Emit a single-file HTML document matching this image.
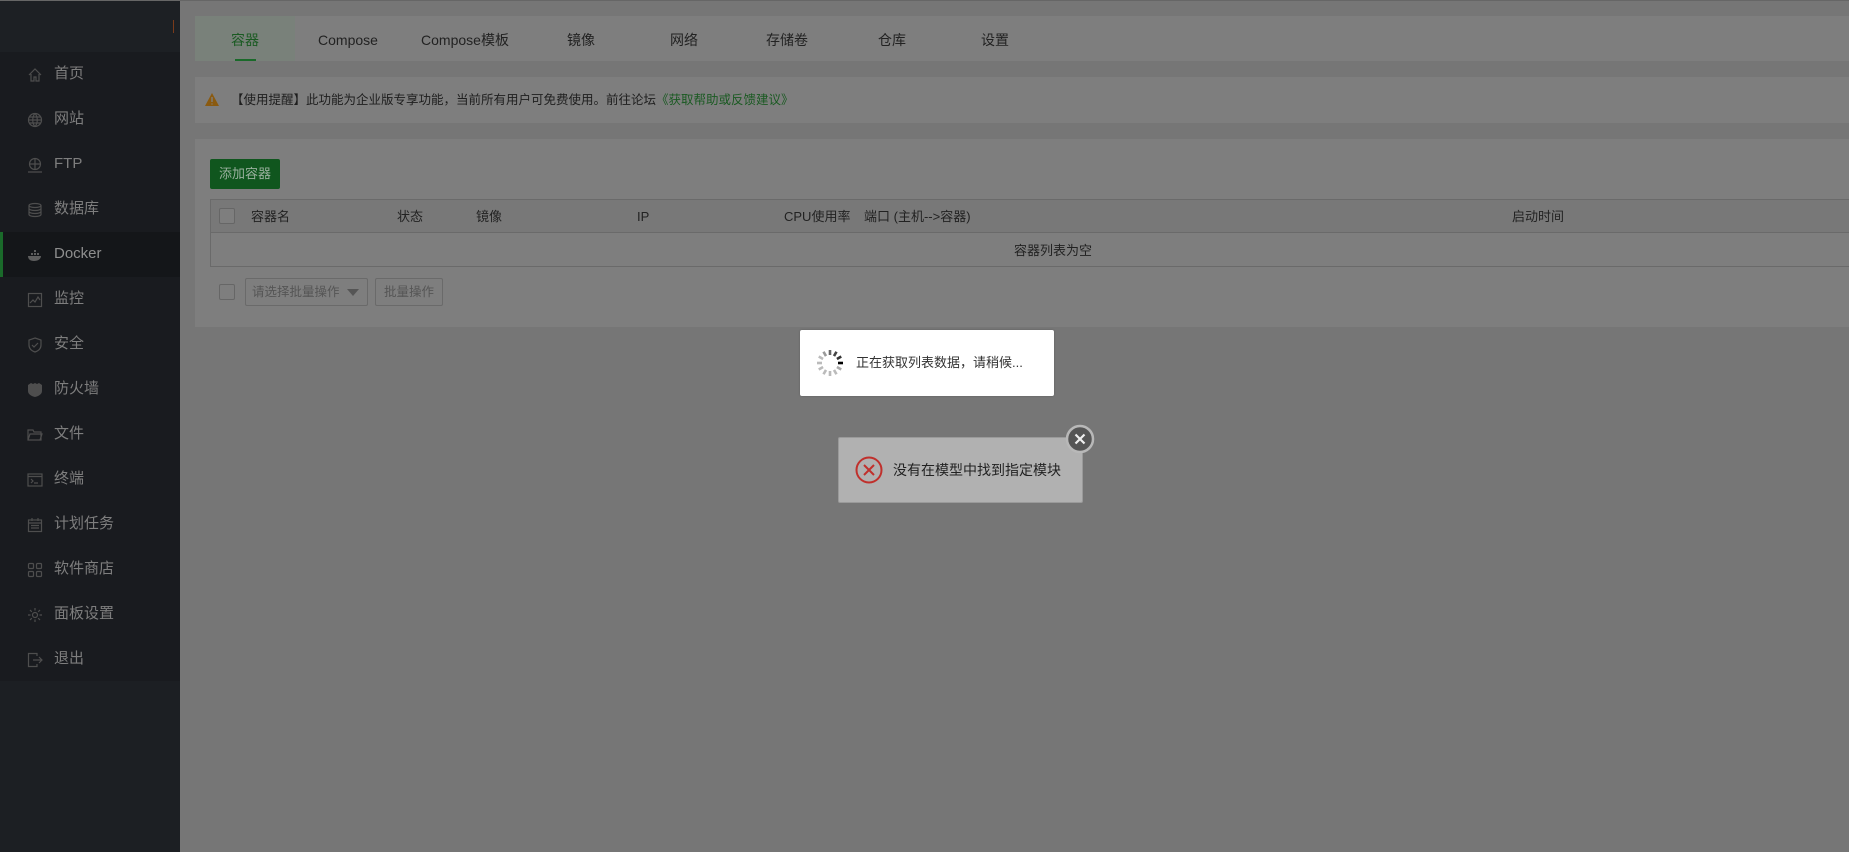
<!DOCTYPE html>
<html><head><meta charset="utf-8"><style>
*{margin:0;padding:0;box-sizing:border-box}
body{width:1849px;height:852px;overflow:hidden;background:#767676;font-family:"Liberation Sans","Noto Sans CJK SC",sans-serif;position:relative}
.sb{position:absolute;left:0;top:0;width:180px;height:852px;background:#1c1f23}
.top{position:absolute;left:0;top:0;width:180px;height:52px;background:#1d2024}
.menu{position:absolute;left:0;top:52px;width:180px;height:629px;background:#191b1f}
.mi{height:45px;display:flex;align-items:center;color:#7e7e7e;font-size:15px;position:relative}
.mi svg{position:absolute;left:27px;width:16px;height:16px}
.mi span{position:absolute;left:54px;line-height:20px;top:12px}
.mi.act{background:#141619;color:#8e8e8e}
.mi.act:before{content:"";position:absolute;left:0;top:0;width:3px;height:45px;background:#1a6a2a}
.abs{position:absolute}
.tabs{left:195px;top:16px;right:0;height:45px;background:#7e7e7e}
.tab{position:absolute;top:0;height:45px;line-height:48px;font-size:14px;color:#222;text-align:center;transform:translateX(-50%);white-space:nowrap}
.notice{left:195px;top:77px;right:0;height:46px;background:#7e7e7e}
.panel{left:195px;top:139px;right:0;height:188px;background:#7e7e7e}
.th{position:absolute;top:208px;font-size:13px;line-height:18px;color:#222;white-space:nowrap}
.cb{position:absolute;width:16px;height:16px;border:1px solid #666;border-radius:2px;background:#7e7e7e}
</style></head><body>
<div style="position:absolute;left:0;top:0;width:1849px;height:1px;background:#666;z-index:5"></div>
<div class="sb"></div>
<div class="top"><div class="abs" style="left:173px;top:20px;width:1px;height:13px;background:#7a3a1a"></div></div>
<div class="menu">
<div class="mi"><svg viewBox="0 0 16 16" fill="none" stroke="#4e4e4e" stroke-width="1.2"><path d="M2 8L8 2l6 6M4 7v7h3v-4h2v4h3V7"/></svg><span>首页</span></div>
<div class="mi"><svg viewBox="0 0 16 16" fill="none" stroke="#4e4e4e" stroke-width="1.2"><circle cx="8" cy="8" r="6.5"/><path d="M1.5 8h13M8 1.5c-3 3-3 10 0 13M8 1.5c3 3 3 10 0 13M2.5 5h11M2.5 11h11"/></svg><span>网站</span></div>
<div class="mi"><svg viewBox="0 0 16 16" fill="none" stroke="#4e4e4e" stroke-width="1.2"><circle cx="8" cy="7" r="5.5"/><path d="M2.5 7h11M8 1.5v11M1 15h14"/></svg><span>FTP</span></div>
<div class="mi"><svg viewBox="0 0 16 16" fill="none" stroke="#4e4e4e" stroke-width="1.2"><ellipse cx="8" cy="3.5" rx="6" ry="2"/><path d="M2 3.5v9c0 1.1 2.7 2 6 2s6-.9 6-2v-9M2 6.5c0 1.1 2.7 2 6 2s6-.9 6-2M2 9.5c0 1.1 2.7 2 6 2s6-.9 6-2"/></svg><span>数据库</span></div>
<div class="mi act"><svg viewBox="0 0 16 16" fill="#5e5e5e"><path d="M1 9h13c0 3-3 5-7 5S1 12 1 9zM4 6h2v2H4zM7 6h2v2H7zM7 3h2v2H7zM10 6h2v2h-2z"/></svg><span>Docker</span></div>
<div class="mi"><svg viewBox="0 0 16 16" fill="none" stroke="#4e4e4e" stroke-width="1.2"><rect x="1.5" y="1.5" width="13" height="13"/><path d="M3 11l3-3 2 2 3-5 2 3"/></svg><span>监控</span></div>
<div class="mi"><svg viewBox="0 0 16 16" fill="none" stroke="#4e4e4e" stroke-width="1.2"><path d="M8 1l6 2v5c0 4-3 6-6 7-3-1-6-3-6-7V3z"/><path d="M5 8l2 2 4-4"/></svg><span>安全</span></div>
<div class="mi"><svg viewBox="0 0 16 16" fill="#4e4e4e"><path d="M1 3l3-2 2 1 2-1 2 1 2-1 3 2v6c0 3-3 5-7 6-4-1-7-3-7-6z"/></svg><span>防火墙</span></div>
<div class="mi"><svg viewBox="0 0 16 16" fill="none" stroke="#4e4e4e" stroke-width="1.2"><path d="M1 13V3h5l1 2h7v8zM1 13l2-6h12l-2 6"/></svg><span>文件</span></div>
<div class="mi"><svg viewBox="0 0 16 16" fill="none" stroke="#4e4e4e" stroke-width="1.2"><rect x="1" y="2" width="14" height="12"/><path d="M1 4.5h14M4 7l2 2-2 2M7 11h4"/></svg><span>终端</span></div>
<div class="mi"><svg viewBox="0 0 16 16" fill="none" stroke="#4e4e4e" stroke-width="1.2"><rect x="1.5" y="3" width="13" height="11.5"/><path d="M1.5 6h13M5 1v3M11 1v3M4 8.5h8M4 11h8"/></svg><span>计划任务</span></div>
<div class="mi"><svg viewBox="0 0 16 16" fill="none" stroke="#4e4e4e" stroke-width="1.2"><rect x="1.5" y="1.5" width="5" height="5" rx="1"/><rect x="9.5" y="1.5" width="5" height="5" rx="1"/><rect x="1.5" y="9.5" width="5" height="5" rx="1"/><rect x="9.5" y="9.5" width="5" height="5" rx="1"/></svg><span>软件商店</span></div>
<div class="mi"><svg viewBox="0 0 16 16" fill="none" stroke="#4e4e4e" stroke-width="1.2"><circle cx="8" cy="8" r="2.5"/><path d="M8 1v2.5M8 12.5V15M1 8h2.5M12.5 8H15M3 3l1.8 1.8M11.2 11.2L13 13M3 13l1.8-1.8M11.2 4.8L13 3"/></svg><span>面板设置</span></div>
<div class="mi"><svg viewBox="0 0 16 16" fill="none" stroke="#4e4e4e" stroke-width="1.2"><path d="M10 4V1.5H1.5v13H10V12M6 8h9M12 5l3 3-3 3"/></svg><span>退出</span></div>
</div>

<div class="abs tabs">
<div class="abs" style="left:0;top:0;width:100px;height:45px;background:#79817a"></div>
<div class="abs" style="left:40px;top:43px;width:21px;height:2px;background:#1a6a2a"></div>
<div class="tab" style="left:50px;color:#1a5a22">容器</div>
<div class="tab" style="left:153px">Compose</div>
<div class="tab" style="left:270px">Compose模板</div>
<div class="tab" style="left:386px">镜像</div>
<div class="tab" style="left:489px">网络</div>
<div class="tab" style="left:592px">存储卷</div>
<div class="tab" style="left:697px">仓库</div>
<div class="tab" style="left:800px">设置</div>
</div>

<div class="abs notice">
<svg class="abs" style="left:10px;top:16px" width="14" height="13" viewBox="0 0 14 13"><path d="M7 0L14 13H0z" fill="#8a5a10"/><path d="M7 4v5M7 10.5v1" stroke="#7e7e7e" stroke-width="1.4"/></svg>
<div class="abs" style="left:36px;top:14px;font-size:12.5px;line-height:18px;color:#1e1e1e;white-space:nowrap">【使用提醒】此功能为企业版专享功能，当前所有用户可免费使用。前往论坛<span style="color:#1a5a22">《获取帮助或反馈建议》</span></div>
</div>

<div class="abs panel"></div>
<div class="abs" style="left:210px;top:159px;width:70px;height:30px;background:#10561e;border-radius:2px;color:#9ab09e;font-size:13px;line-height:30px;text-align:center">添加容器</div>
<div class="abs" style="left:210px;top:199px;right:0;height:68px;border:1px solid #6a6a6a;border-right:none"></div>
<div class="abs" style="left:211px;top:200px;right:0;height:33px;background:#787878;border-bottom:1px solid #6a6a6a"></div>
<div class="cb" style="left:219px;top:208px"></div>
<div class="th" style="left:251px">容器名</div>
<div class="th" style="left:397px">状态</div>
<div class="th" style="left:476px">镜像</div>
<div class="th" style="left:637px">IP</div>
<div class="th" style="left:784px">CPU使用率</div>
<div class="th" style="left:864px">端口 (主机-->容器)</div>
<div class="th" style="left:1512px">启动时间</div>
<div class="th" style="left:1014px;top:242px">容器列表为空</div>
<div class="cb" style="left:219px;top:284px"></div>
<div class="abs" style="left:245px;top:278px;width:123px;height:28px;border:1px solid #6a6a6a;border-radius:2px;font-size:12.5px;color:#555;line-height:26px;padding-left:6px">请选择批量操作<span style="position:absolute;right:8px;top:10px;width:0;height:0;border-left:6px solid transparent;border-right:6px solid transparent;border-top:7px solid #555"></span></div>
<div class="abs" style="left:375px;top:278px;width:68px;height:28px;border:1px solid #6a6a6a;border-radius:2px;font-size:12.5px;color:#555;line-height:26px;text-align:center">批量操作</div>

<div class="abs" style="left:800px;top:330px;width:254px;height:66px;background:#fff;border-radius:2px;box-shadow:0 0 2px rgba(0,0,0,.2)">
<svg class="abs" style="left:15px;top:18px" width="30" height="30" viewBox="-15 -15 30 30">
<g stroke-width="2.6" stroke-linecap="butt">
<line x1="0" y1="-8" x2="0" y2="-13" stroke="#444" transform="rotate(30)"/>
<line x1="0" y1="-8" x2="0" y2="-13" stroke="#333" transform="rotate(60)"/>
<line x1="0" y1="-8" x2="0" y2="-13" stroke="#000" transform="rotate(90)"/>
<line x1="0" y1="-8" x2="0" y2="-13" stroke="#aaa" transform="rotate(120)"/>
<line x1="0" y1="-8" x2="0" y2="-13" stroke="#bbb" transform="rotate(150)"/>
<line x1="0" y1="-8" x2="0" y2="-13" stroke="#bbb" transform="rotate(180)"/>
<line x1="0" y1="-8" x2="0" y2="-13" stroke="#bbb" transform="rotate(210)"/>
<line x1="0" y1="-8" x2="0" y2="-13" stroke="#bbb" transform="rotate(240)"/>
<line x1="0" y1="-8" x2="0" y2="-13" stroke="#bbb" transform="rotate(270)"/>
<line x1="0" y1="-8" x2="0" y2="-13" stroke="#bbb" transform="rotate(300)"/>
<line x1="0" y1="-8" x2="0" y2="-13" stroke="#999" transform="rotate(330)"/>
<line x1="0" y1="-8" x2="0" y2="-13" stroke="#666" transform="rotate(0)"/>
</g></svg>
<div class="abs" style="left:56px;top:24px;font-size:13px;line-height:18px;color:#333;white-space:nowrap">正在获取列表数据，请稍候...</div>
</div>

<div class="abs" style="left:838px;top:437px;width:245px;height:66px;background:#b1b1b1;border:1px solid #9a9a9a;border-radius:2px">
<svg class="abs" style="left:16px;top:18px" width="28" height="28" viewBox="0 0 28 28"><circle cx="14" cy="14" r="12.5" fill="none" stroke="#c0302c" stroke-width="2"/><path d="M9 9l10 10M19 9L9 19" stroke="#c0302c" stroke-width="2"/></svg>
<div class="abs" style="left:54px;top:22px;font-size:14px;line-height:20px;color:#222;white-space:nowrap">没有在模型中找到指定模块</div>
</div>
<svg class="abs" style="left:1065px;top:424px" width="30" height="30" viewBox="0 0 30 30"><circle cx="15" cy="15" r="13" fill="#555" stroke="#b8b8b8" stroke-width="2.5"/><path d="M10.5 10.5l9 9M19.5 10.5l-9 9" stroke="#eee" stroke-width="2.2"/></svg>
</body></html>
